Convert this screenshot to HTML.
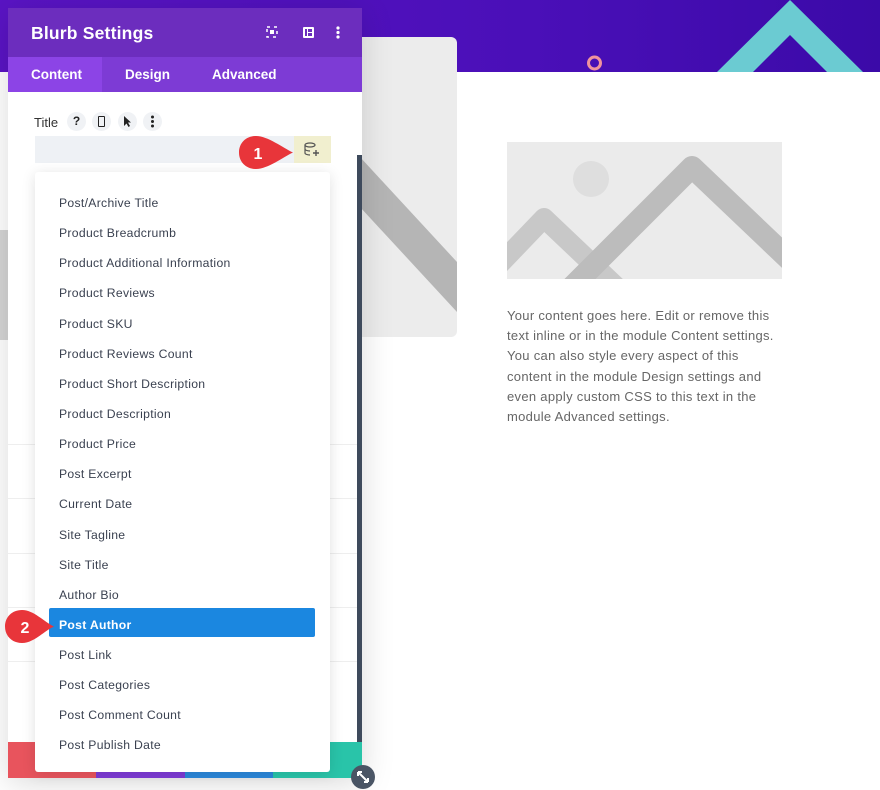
<!DOCTYPE html>
<html><head><meta charset="utf-8"><style>
*{margin:0;padding:0;box-sizing:border-box}
body{width:880px;height:788px;position:relative;overflow:hidden;background:#fff;font-family:"Liberation Sans",sans-serif}
.top{position:absolute;left:0;top:0;width:880px;height:72px;background:linear-gradient(90deg,#5a14c4,#4a0fb8 60%,#3b0aa8)}
.abs{position:absolute}
.modal{position:absolute;left:8px;top:8px;width:354px;height:770px;background:#fff;box-shadow:0 5px 30px rgba(0,0,0,.15)}
.hdr{height:49px;background:#6c2dbe;color:#fff;font-size:17.5px;font-weight:bold;padding:15px 0 0 23px;letter-spacing:.2px}
.tabs{height:35px;background:#7d3bd5;color:#fff;font-size:13.5px;font-weight:bold;position:relative}
.tabs span{position:absolute;top:10px}
.dd{position:absolute;left:35px;top:172px;width:295px;height:600px;background:#fff;box-shadow:0 2px 14px rgba(0,0,0,.12);border-radius:3px}
.dd div{position:absolute;left:24px;font-size:12.2px;color:#3a4150;letter-spacing:.3px;margin-top:1px}
.txt{position:absolute;left:507px;top:306px;width:276px;font-size:13px;letter-spacing:.3px;line-height:20.2px;color:#666}
</style></head><body>
<div class="top"></div>
<svg class="abs" style="left:700px;top:0" width="180" height="72"><polygon points="90,0 163,72 127,72 90,35 53,72 17,72" fill="#6bcbd2"/></svg>
<svg class="abs" style="left:586px;top:55px" width="18" height="18"><circle cx="8.5" cy="8" r="6" fill="none" stroke="#f0939d" stroke-width="3"/></svg>
<div class="abs" style="left:360px;top:37px;width:97px;height:300px;background:#ececec;border-radius:0 6px 6px 0;overflow:hidden"><svg width="97" height="300"><polygon points="0,120 0,170 97,275 97,225" fill="#b5b5b5"/></svg></div>
<div class="abs" style="left:0;top:230px;width:8px;height:110px;background:#d5d5d5"></div>
<svg class="abs" style="left:507px;top:142px" width="275" height="137"><rect width="275" height="137" fill="#ebebeb"/><circle cx="84" cy="37" r="18" fill="#dedede"/><polyline points="-10,125 37,76 115,150" fill="none" stroke="#c8c8c8" stroke-width="20" stroke-linejoin="round"/><polyline points="60,150 185,25 290,125" fill="none" stroke="#bcbcbc" stroke-width="22" stroke-linejoin="round"/></svg>
<div class="txt">Your content goes here. Edit or remove this text inline or in the module Content settings. You can also style every aspect of this content in the module Design settings and even apply custom CSS to this text in the module Advanced settings.</div>
<div class="modal">
<div class="hdr">Blurb Settings
<svg class="abs" style="left:258px;top:18px" width="12" height="12"><rect x="1" y="1" width="10" height="10" fill="none" stroke="#fff" stroke-width="1.5" stroke-dasharray="3 4"/><rect x="4" y="4" width="4" height="4" fill="#fff"/></svg>
<svg class="abs" style="left:295px;top:19px" width="11" height="11"><rect width="11" height="11" fill="#fff" rx="1"/><rect x="2" y="2" width="2" height="7" fill="#6c2dbe"/><rect x="5" y="2" width="4" height="3" fill="#6c2dbe"/><rect x="5" y="6" width="4" height="3" fill="#6c2dbe"/></svg>
<svg class="abs" style="left:328px;top:18px" width="4" height="13"><circle cx="2" cy="2" r="1.6" fill="#fff"/><circle cx="2" cy="6.5" r="1.6" fill="#fff"/><circle cx="2" cy="11" r="1.6" fill="#fff"/></svg>
</div>
<div class="tabs"><div class="abs" style="left:0;top:0;width:94px;height:35px;background:#8c44e6"></div><span style="left:23px">Content</span><span style="left:117px">Design</span><span style="left:204px">Advanced</span></div>
<div class="abs" style="left:26px;top:107px;font-size:13px;color:#333">Title</div>
<div class="abs" style="left:59px;top:104px;width:19px;height:19px;border-radius:50%;background:#f0f2f5;font-size:12px;font-weight:bold;text-align:center;line-height:19px;color:#222">?</div>
<div class="abs" style="left:84px;top:104px;width:19px;height:19px;border-radius:50%;background:#f0f2f5"><div class="abs" style="left:6px;top:4px;width:7px;height:11px;border:1.5px solid #222;border-radius:1px"></div></div>
<svg class="abs" style="left:110px;top:104px" width="19" height="19"><circle cx="9.5" cy="9.5" r="9.5" fill="#f0f2f5"/><polygon points="6,4 6,14 8.5,11.5 10.5,15 12,14 10,10.5 13,10.5" fill="#222"/></svg>
<svg class="abs" style="left:135px;top:104px" width="19" height="19"><circle cx="9.5" cy="9.5" r="9.5" fill="#f0f2f5"/><circle cx="9.5" cy="5" r="1.5" fill="#222"/><circle cx="9.5" cy="9.5" r="1.5" fill="#222"/><circle cx="9.5" cy="14" r="1.5" fill="#222"/></svg>
<div class="abs" style="left:27px;top:128px;width:296px;height:27px;background:#eef1f5"></div>
<div class="abs" style="left:286px;top:128px;width:37px;height:27px;background:#f1efcf"></div>
<svg class="abs" style="left:296px;top:134px" width="16" height="16"><ellipse cx="6" cy="3" rx="5" ry="2" fill="none" stroke="#555" stroke-width="1.2"/><path d="M1 3v8c0 1 2 2 5 2M1 7c0 1 2 2 5 2" fill="none" stroke="#555" stroke-width="1.2"/><path d="M12 8v6M9 11h6" stroke="#555" stroke-width="1.4"/></svg>
<div class="abs" style="left:0;top:436px;width:349px;height:1px;background:#eee"></div>
<div class="abs" style="left:0;top:490px;width:349px;height:1px;background:#eee"></div>
<div class="abs" style="left:0;top:545px;width:349px;height:1px;background:#eee"></div>
<div class="abs" style="left:0;top:599px;width:349px;height:1px;background:#eee"></div>
<div class="abs" style="left:0;top:653px;width:349px;height:1px;background:#eee"></div>
<div class="abs" style="left:349px;top:147px;width:5px;height:610px;background:#3e4a5c"></div>
<div class="abs" style="left:0;top:734px;width:88px;height:36px;background:#e8545d"></div>
<div class="abs" style="left:88px;top:734px;width:89px;height:36px;background:#7d3bd5"></div>
<div class="abs" style="left:177px;top:734px;width:88px;height:36px;background:#2b87da"></div>
<div class="abs" style="left:265px;top:734px;width:89px;height:36px;background:#29c4a9"></div>
</div>
<div class="dd">
<div style="top:23px">Post/Archive Title</div>
<div style="top:53px">Product Breadcrumb</div>
<div style="top:83px">Product Additional Information</div>
<div style="top:113px">Product Reviews</div>
<div style="top:144px">Product SKU</div>
<div style="top:174px">Product Reviews Count</div>
<div style="top:204px">Product Short Description</div>
<div style="top:234px">Product Description</div>
<div style="top:264px">Product Price</div>
<div style="top:294px">Post Excerpt</div>
<div style="top:324px">Current Date</div>
<div style="top:355px">Site Tagline</div>
<div style="top:385px">Site Title</div>
<div style="top:415px">Author Bio</div>
<div style="left:14px;top:435px;width:266px;height:29px;background:#1b87e0;border-radius:2px"></div>
<div style="top:445px;color:#fff;font-weight:bold">Post Author</div>
<div style="top:475px">Post Link</div>
<div style="top:505px">Post Categories</div>
<div style="top:535px">Post Comment Count</div>
<div style="top:565px">Post Publish Date</div>
</div>
<svg class="abs" style="left:238px;top:135px" width="58" height="36"><path d="M18 1C8 1 1 8 1 17.5S8 34 18 34C30 34 45 22 55 17.5 45 13 30 1 18 1Z" fill="#e8353a"/><text x="20" y="24" fill="#fff" font-size="16" font-weight="bold" text-anchor="middle" font-family="Liberation Sans">1</text></svg>
<svg class="abs" style="left:4px;top:609px" width="52" height="36"><path d="M18 1C8 1 1 8 1 17.5S8 34 18 34C30 34 40 22 50 17.5 40 13 30 1 18 1Z" fill="#e8353a"/><text x="21" y="24" fill="#fff" font-size="16" font-weight="bold" text-anchor="middle" font-family="Liberation Sans">2</text></svg>
<svg class="abs" style="left:350px;top:764px" width="26" height="26"><circle cx="13" cy="13" r="12" fill="#4a5565"/><path d="M8 8l10 10M8 8h4M8 8v4M18 18h-4M18 18v-4" stroke="#fff" stroke-width="2" fill="none"/></svg>
</body></html>
